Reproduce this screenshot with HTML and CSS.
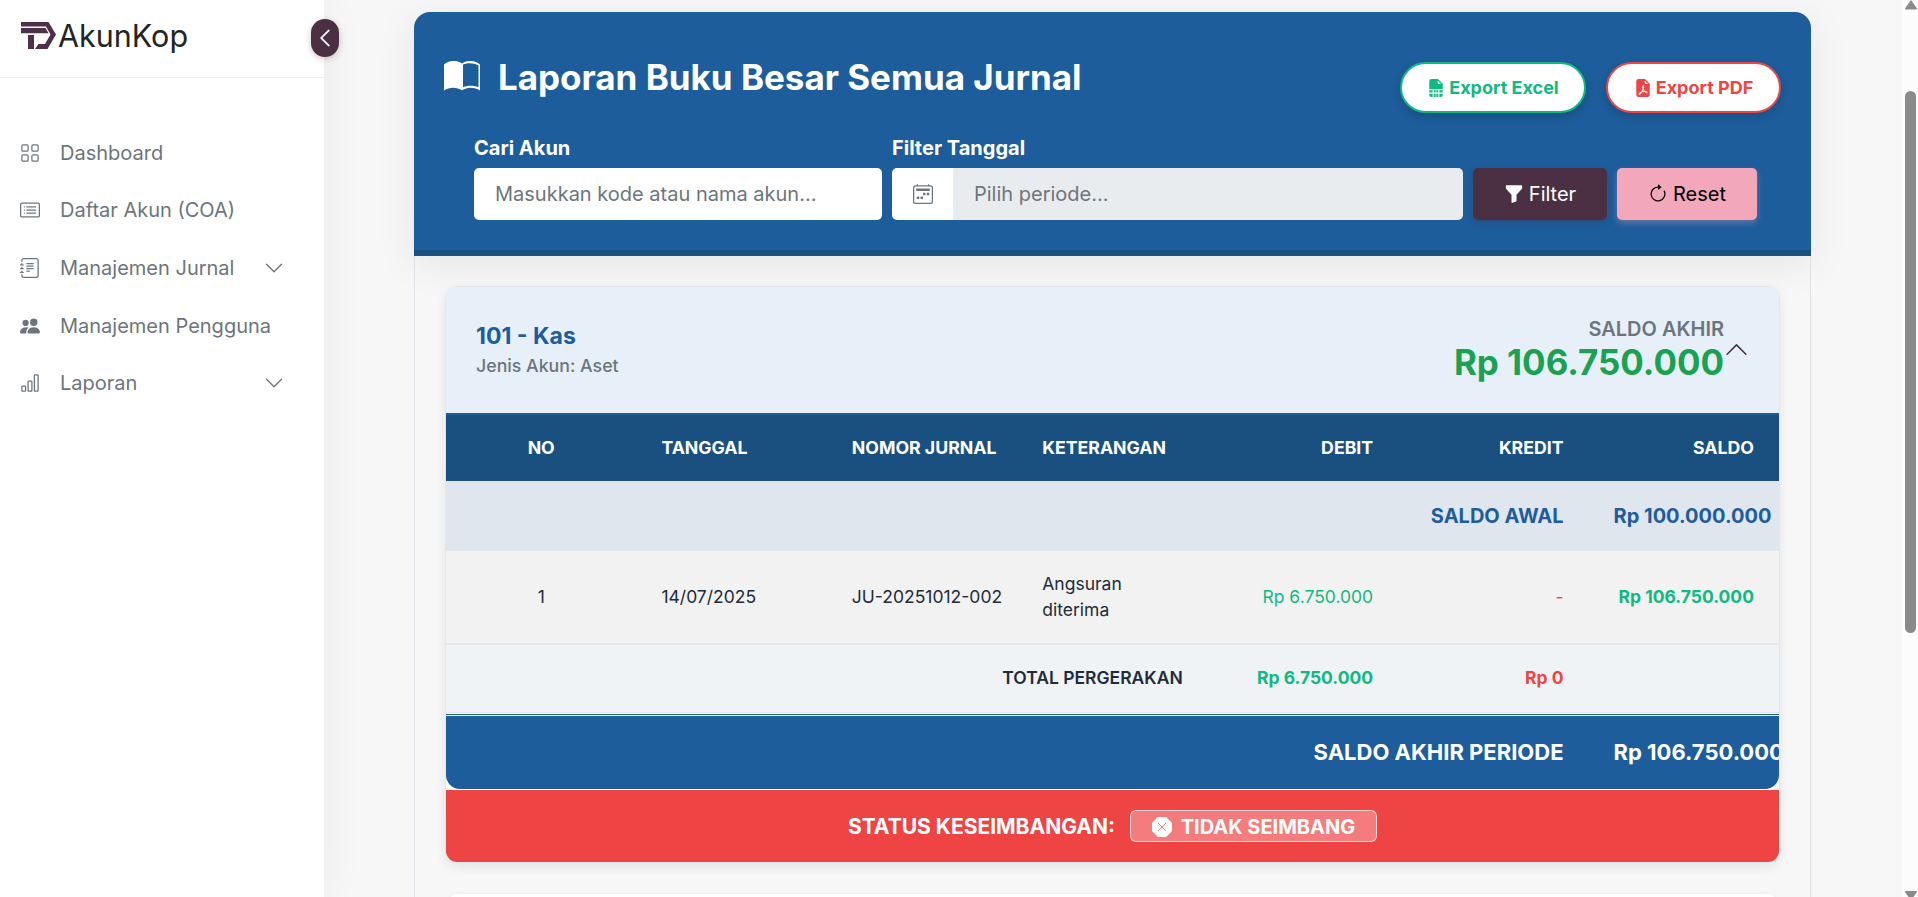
FILE: index.html
```html
<!DOCTYPE html>
<html lang="id">
<head>
<meta charset="utf-8">
<title>AkunKop</title>
<link rel="stylesheet" href="styles.css">
</head>
<body>
<div class="app">
  <aside class="sidebar">
    <div class="brand">
      <svg class="brand-logo" viewBox="0 0 35 27"><path fill="#4f3048" d="M0 0h27.500l7.500 12.500-8.500 14.500H14l3.500-5h6.500l5.500-9.500-4.500-8H0z"/><path fill="#4f3048" d="M0 6h24.500l3 5.200H0zM7 13h6v14H7z"/></svg>
      <span class="brand-name">AkunKop</span>
    </div>
    <button class="toggle"><svg width="20" height="20" viewBox="0 0 16 16" fill="currentColor" stroke="currentColor" stroke-width=".5"><path d="M11.354 1.646a.5.5 0 0 1 0 .708L5.707 8l5.647 5.646a.5.5 0 0 1-.708.708l-6-6a.5.5 0 0 1 0-.708l6-6a.5.5 0 0 1 .708 0"/></svg></button>
    <nav class="menu">
      <a class="item"><svg class="icon" viewBox="0 0 16 16"><path d="M1 2.500A1.500 1.500 0 0 1 2.500 1h3A1.500 1.500 0 0 1 7 2.500v3A1.500 1.500 0 0 1 5.500 7h-3A1.500 1.500 0 0 1 1 5.500zM2.500 2a.5.5 0 0 0-.5.5v3a.5.5 0 0 0 .5.5h3a.5.5 0 0 0 .5-.5v-3a.5.5 0 0 0-.5-.5zm6.500.5A1.500 1.500 0 0 1 10.500 1h3A1.500 1.500 0 0 1 15 2.500v3A1.500 1.500 0 0 1 13.500 7h-3A1.500 1.500 0 0 1 9 5.500zm1.500-.5a.5.5 0 0 0-.5.5v3a.5.5 0 0 0 .5.5h3a.5.5 0 0 0 .5-.5v-3a.5.5 0 0 0-.5-.5zM1 10.500A1.500 1.500 0 0 1 2.500 9h3A1.500 1.500 0 0 1 7 10.500v3A1.500 1.500 0 0 1 5.500 15h-3A1.500 1.500 0 0 1 1 13.500zm1.500-.5a.5.5 0 0 0-.5.5v3a.5.5 0 0 0 .5.5h3a.5.5 0 0 0 .5-.5v-3a.5.5 0 0 0-.5-.5zm6.500.5A1.500 1.500 0 0 1 10.500 9h3a1.500 1.500 0 0 1 1.500 1.500v3a1.500 1.500 0 0 1-1.500 1.500h-3A1.500 1.500 0 0 1 9 13.500zm1.500-.5a.5.5 0 0 0-.5.5v3a.5.5 0 0 0 .5.5h3a.5.5 0 0 0 .5-.5v-3a.5.5 0 0 0-.5-.5z"/></svg><span>Dashboard</span></a>
      <a class="item"><svg class="icon" viewBox="0 0 16 16"><path d="M14.500 3a.5.5 0 0 1 .5.5v9a.5.5 0 0 1-.5.5h-13a.5.5 0 0 1-.5-.5v-9a.5.5 0 0 1 .5-.5zm-13-1A1.500 1.500 0 0 0 0 3.500v9A1.500 1.500 0 0 0 1.500 14h13a1.500 1.500 0 0 0 1.500-1.500v-9A1.500 1.500 0 0 0 14.500 2z"/><path d="M5 8a.5.5 0 0 1 .5-.5h7a.5.5 0 0 1 0 1h-7A.5.5 0 0 1 5 8m0-2.500a.5.5 0 0 1 .5-.5h7a.5.5 0 0 1 0 1h-7a.5.5 0 0 1-.5-.5m0 5a.5.5 0 0 1 .5-.5h7a.5.5 0 0 1 0 1h-7a.5.5 0 0 1-.5-.5"/><circle cx="3.500" cy="5.500" r=".5"/><circle cx="3.500" cy="8" r=".5"/><circle cx="3.500" cy="10.500" r=".5"/></svg><span>Daftar Akun (COA)</span></a>
      <a class="item"><svg class="icon" viewBox="0 0 16 16"><path d="M5 10.500a.5.5 0 0 1 .5-.5h2a.5.5 0 0 1 0 1h-2a.5.5 0 0 1-.5-.5m0-2a.5.5 0 0 1 .5-.5h5a.5.5 0 0 1 0 1h-5a.5.5 0 0 1-.5-.5m0-2a.5.5 0 0 1 .5-.5h5a.5.5 0 0 1 0 1h-5a.5.5 0 0 1-.5-.5m0-2a.5.5 0 0 1 .5-.5h5a.5.5 0 0 1 0 1h-5a.5.5 0 0 1-.5-.5"/><path d="M3 0h10a2 2 0 0 1 2 2v12a2 2 0 0 1-2 2H3a2 2 0 0 1-2-2v-1h1v1a1 1 0 0 0 1 1h10a1 1 0 0 0 1-1V2a1 1 0 0 0-1-1H3a1 1 0 0 0-1 1v1H1V2a2 2 0 0 1 2-2"/><path d="M1 5v-.5a.5.5 0 0 1 1 0V5h.5a.5.5 0 0 1 0 1h-2a.5.5 0 0 1 0-1zm0 3v-.5a.5.5 0 0 1 1 0V8h.5a.5.5 0 0 1 0 1h-2a.5.5 0 0 1 0-1zm0 3v-.5a.5.5 0 0 1 1 0v.5h.5a.5.5 0 0 1 0 1h-2a.5.5 0 0 1 0-1z"/></svg><span>Manajemen Jurnal</span><svg class="chev" viewBox="0 0 16 16"><path d="M1.646 4.646a.5.5 0 0 1 .708 0L8 10.293l5.646-5.647a.5.5 0 0 1 .708.708l-6 6a.5.5 0 0 1-.708 0l-6-6a.5.5 0 0 1 0-.708"/></svg></a>
      <a class="item"><svg class="icon" viewBox="0 0 16 16"><path d="M7 14s-1 0-1-1 1-4 5-4 5 3 5 4-1 1-1 1zm4-6a3 3 0 1 0 0-6 3 3 0 0 0 0 6m-5.784 6A2.240 2.240 0 0 1 5 13c0-1.355.68-2.750 1.936-3.720A6.300 6.300 0 0 0 5 9c-4 0-5 3-5 4s1 1 1 1zM4.500 8a2.500 2.500 0 1 0 0-5 2.500 2.500 0 0 0 0 5"/></svg><span>Manajemen Pengguna</span></a>
      <a class="item"><svg class="icon" viewBox="0 0 16 16"><path d="M4 11H2v3h2zm5-4H7v7h2zm5-5v12h-2V2zm-2-1a1 1 0 0 0-1 1v12a1 1 0 0 0 1 1h2a1 1 0 0 0 1-1V2a1 1 0 0 0-1-1zM6 7a1 1 0 0 1 1-1h2a1 1 0 0 1 1 1v7a1 1 0 0 1-1 1H7a1 1 0 0 1-1-1zm-5 4a1 1 0 0 1 1-1h2a1 1 0 0 1 1 1v3a1 1 0 0 1-1 1H2a1 1 0 0 1-1-1z"/></svg><span>Laporan</span><svg class="chev" viewBox="0 0 16 16"><path d="M1.646 4.646a.5.5 0 0 1 .708 0L8 10.293l5.646-5.647a.5.5 0 0 1 .708.708l-6 6a.5.5 0 0 1-.708 0l-6-6a.5.5 0 0 1 0-.708"/></svg></a>
    </nav>
  </aside>
  <main class="content">
    <section class="report">
      <header class="report-head">
        <div class="title-row">
          <h1 class="title"><svg class="title-icon" viewBox="0 0 36 30"><path fill="#fff" fill-rule="evenodd" d="M0 3.500C5-.8 13-1.200 18 2.400 23-1.200 31-.8 36 3.500V29.500C31 25.800 23 25.800 18 29.200 13 25.800 5 25.800 0 29.500zM19 3.700v22.500c4-2 11-2 15.500 0V4.500c-4.500-2.800-11.500-3-15.500-.8z"/></svg>Laporan Buku Besar Semua Jurnal</h1>
          <div class="exports">
            <button class="export excel"><svg class="btn-icon" viewBox="0 0 16 16"><path d="M9.293 0H4a2 2 0 0 0-2 2v7h12V4.707A1 1 0 0 0 13.707 4L10 .293A1 1 0 0 0 9.293 0M9.500 3.500v-2l3 3h-2a1 1 0 0 1-1-1M14 10h-3v2h3zm0 3h-3v3h1a2 2 0 0 0 2-2zM10 16v-3H6v3zM10 12v-2H6v2zM5 16v-3H2v1a2 2 0 0 0 2 2zM2 12h3v-2H2z"/><path d="M8 10v6" stroke="#fff" stroke-width=".7"/></svg>Export Excel</button>
            <button class="export pdf"><svg class="btn-icon" viewBox="0 0 16 16"><path d="M5.523 12.424q.21-.124.459-.238a8 8 0 0 1-.45.606c-.28.337-.498.516-.635.572l-.035.012a.3.300 0 0 1-.026-.044c-.056-.11-.054-.216.04-.36.106-.165.319-.354.647-.548m2.455-1.647q-.178.037-.356.078a21 21 0 0 0 .5-1.050 12 12 0 0 0 .51.858q-.326.048-.654.114m2.525.939a4 4 0 0 1-.435-.41q.344.007.612.054c.317.057.466.147.518.209a.1.100 0 0 1 .026.064.44.440 0 0 1-.06.200.3.300 0 0 1-.094.124.1.100 0 0 1-.069.015c-.09-.003-.258-.066-.498-.256M8.278 6.970c-.04.244-.108.524-.200.829a5 5 0 0 1-.089-.346c-.076-.353-.087-.630-.046-.822.038-.177.110-.248.196-.283a.5.500 0 0 1 .145-.040c.013.030.028.092.032.198q.008.183-.038.465z"/><path fill-rule="evenodd" d="M4 0h5.293A1 1 0 0 1 10 .293L13.707 4a1 1 0 0 1 .293.707V14a2 2 0 0 1-2 2H4a2 2 0 0 1-2-2V2a2 2 0 0 1 2-2m5.500 1.500v2a1 1 0 0 0 1 1h2zM4.165 13.668c.090.180.230.343.438.419.207.075.412.040.580-.030.318-.130.635-.436.926-.786.333-.401.683-.927 1.021-1.510a11.700 11.700 0 0 1 1.997-.406c.300.383.610.713.910.950.280.220.603.403.934.417a.86.860 0 0 0 .510-.138c.155-.101.270-.247.354-.416.090-.181.145-.370.138-.563a.84.840 0 0 0-.200-.518c-.226-.270-.596-.400-.960-.465a5.800 5.800 0 0 0-1.335-.050 11 11 0 0 1-.980-1.686c.250-.660.437-1.284.520-1.794.036-.218.055-.426.048-.614a1.240 1.240 0 0 0-.127-.538.700.700 0 0 0-.477-.365c-.202-.043-.410 0-.601.077-.377.150-.576.470-.651.823-.073.340-.040.736.046 1.136.088.406.238.848.430 1.295a20 20 0 0 1-1.062 2.227 7.700 7.700 0 0 0-1.482.645c-.370.220-.699.480-.897.787-.210.326-.275.714-.080 1.103"/></svg>Export PDF</button>
          </div>
        </div>
        <div class="filters">
          <div class="field search"><label>Cari Akun</label><div class="input">Masukkan kode atau nama akun...</div></div>
          <div class="field period"><label>Filter Tanggal</label>
            <div class="group"><div class="addon"><svg width="20" height="20" viewBox="0 0 16 16"><path d="M11 7.500a.5.5 0 0 1 .5-.5h1a.5.5 0 0 1 .5.5v1a.5.5 0 0 1-.5.5h-1a.5.5 0 0 1-.5-.5zm-3 0a.5.5 0 0 1 .5-.5h1a.5.5 0 0 1 .5.5v1a.5.5 0 0 1-.5.5h-1a.5.5 0 0 1-.5-.5zm-2 3a.5.5 0 0 1 .5-.5h1a.5.5 0 0 1 .5.5v1a.5.5 0 0 1-.5.5h-1a.5.5 0 0 1-.5-.5zm-3 0a.5.5 0 0 1 .5-.5h1a.5.5 0 0 1 .5.5v1a.5.5 0 0 1-.5.5h-1a.5.5 0 0 1-.5-.5z"/><path d="M3.500 0a.5.5 0 0 1 .5.5V1h8V.5a.5.5 0 0 1 1 0V1h1a2 2 0 0 1 2 2v11a2 2 0 0 1-2 2H2a2 2 0 0 1-2-2V3a2 2 0 0 1 2-2h1V.5a.5.5 0 0 1 .5-.5M2 2a1 1 0 0 0-1 1v11a1 1 0 0 0 1 1h12a1 1 0 0 0 1-1V3a1 1 0 0 0-1-1z"/><path d="M2.500 4a.5.5 0 0 1 .5-.5h10a.5.5 0 0 1 .5.5v1a.5.5 0 0 1-.5.5H3a.5.5 0 0 1-.5-.5z"/></svg></div><div class="input readonly">Pilih periode...</div></div>
          </div>
          <button class="action apply"><svg width="20" height="20" viewBox="0 0 16 16"><path d="M1.500 1.500A.5.5 0 0 1 2 1h12a.5.5 0 0 1 .5.5v2a.5.5 0 0 1-.128.334L10 8.692V13.500a.5.5 0 0 1-.342.474l-3 1A.5.5 0 0 1 6 14.500V8.692L1.628 3.834A.5.5 0 0 1 1.500 3.500z"/></svg>Filter</button>
          <button class="action reset"><svg width="20" height="20" viewBox="0 0 16 16"><path fill-rule="evenodd" d="M8 3a5 5 0 1 0 4.546 2.914.5.5 0 0 1 .908-.417A6 6 0 1 1 8 2z"/><path d="M8 4.466V.534a.25.250 0 0 1 .410-.192l2.360 1.966c.120.100.120.284 0 .384L8.410 4.658A.25.250 0 0 1 8 4.466"/></svg>Reset</button>
        </div>
      </header>
      <div class="report-body">
        <article class="account">
          <div class="account-head">
            <div class="account-info"><div class="account-name">101 - Kas</div><div class="account-type">Jenis Akun: Aset</div></div>
            <div class="balance"><div class="balance-label">SALDO AKHIR</div><div class="balance-value">Rp 106.750.000</div></div>
            <svg class="collapse" viewBox="0 0 16 16"><path d="M7.646 4.646a.5.5 0 0 1 .708 0l6 6a.5.5 0 0 1-.708.708L8 5.707l-5.646 5.647a.5.5 0 0 1-.708-.708z"/></svg>
          </div>
          <div class="table">
            <div class="row thead"><div class="center">NO</div><div>TANGGAL</div><div>NOMOR JURNAL</div><div>KETERANGAN</div><div class="num">DEBIT</div><div class="num">KREDIT</div><div class="num">SALDO</div></div>
            <div class="row opening"><div class="num span6">SALDO AWAL</div><div>Rp 100.000.000</div></div>
            <div class="row entry"><div class="center">1</div><div>14/07/2025</div><div>JU-20251012-002</div><div>Angsuran<br>diterima</div><div class="num green">Rp 6.750.000</div><div class="num red">-</div><div class="num green strong">Rp 106.750.000</div></div>
            <div class="row total"><div class="num span4">TOTAL PERGERAKAN</div><div class="num green strong">Rp 6.750.000</div><div class="num red strong">Rp 0</div><div></div></div>
            <div class="row closing"><div class="num span6">SALDO AKHIR PERIODE</div><div>Rp 106.750.000</div></div>
          </div>
          <div class="status"><span>STATUS KESEIMBANGAN:</span><span class="badge"><svg width="20" height="20" viewBox="0 0 16 16"><path d="M11.460.146A.5.5 0 0 0 11.107 0H4.893a.5.5 0 0 0-.353.146L.146 4.540A.5.5 0 0 0 0 4.893v6.214a.5.5 0 0 0 .146.353l4.394 4.394a.5.5 0 0 0 .353.146h6.214a.5.5 0 0 0 .353-.146l4.394-4.394a.5.5 0 0 0 .146-.353V4.893a.5.5 0 0 0-.146-.353z"/><path d="M5 5l6 6M11 5l-6 6" stroke="#f47c7c" stroke-width=".8" stroke-linecap="round"/></svg>TIDAK SEIMBANG</span></div>
        </article>
        <div class="next-card"></div>
      </div>
    </section>
  </main>
  <div class="scrollbar"><svg width="12" height="10" viewBox="0 0 12 10"><path d="M6 0l6 8.500q0 1-1 1H1q-1 0-1-1z"/></svg><div class="thumb"></div><svg class="down" width="12" height="6" viewBox="0 0 12 6"><path d="M1 0h10q1 0 1 1L8.500 6h-5L0 1q0-1 1-1z"/></svg></div>
</div>
</body>
</html>
```
FILE: styles.css
```css
* { box-sizing: border-box; }
body { margin: 0; background: #f7f7f7; font-family: Inter, "Liberation Sans", sans-serif; font-size: 20px; color: #212529; overflow: hidden; }
button { font-family: inherit; }
.app { display: flex; height: 897px; overflow: hidden; }

.sidebar { position: relative; z-index: 1; width: 324px; flex: none; background: #fff; box-shadow: 0 0 40px rgba(0,0,0,.06); }
.brand { height: 78px; border-bottom: 1px solid #ececec; padding: 0 0 6px 21px; display: flex; align-items: center; gap: 2px; }
.brand-logo { width: 35px; height: 27px; }
.brand-name { font-size: 30.500px; line-height: 36px; }
.toggle { position: absolute; left: 311px; top: 19px; width: 28px; height: 38px; border: 0; border-radius: 14px; background: #4b3044; color: #fff; padding: 0; display: flex; align-items: center; justify-content: center; box-shadow: 0 2px 6px rgba(75,48,68,.25); }
.menu { padding: 46px 20px 0; }
.item { display: flex; align-items: center; height: 57.6px; color: #6c757d; }
.icon { width: 20px; height: 20px; margin-right: 20px; fill: currentColor; flex: none; }
.chev { width: 20px; height: 20px; margin: 0 20px 0 auto; fill: currentColor; }

.content { flex: 1; padding: 12px 90px 0; }
.report { width: 1397px; }
.report-head { height: 244px; background: #1d5d9b; border-bottom: 6px solid #1a5080; border-radius: 16px 16px 0 0; padding: 41px 30px 0; box-shadow: 0 8px 40px rgba(0,0,0,.08); color: #fff; }
.title-row { display: flex; justify-content: space-between; height: 82px; }
.title { margin: 0; display: flex; align-items: flex-start; gap: 18px; font-size: 35px; line-height: 48px; font-weight: 700; letter-spacing: -.02px; }
.title-icon { width: 36px; height: 30px; margin-top: 8px; }
.exports { display: flex; gap: 20px; padding-top: 9px; }
.export { height: 51px; border: 2px solid; border-radius: 26px; background: #fff; font-size: 18px; font-weight: 700; display: flex; align-items: center; justify-content: center; gap: 4px; padding: 0; box-shadow: 0 4px 8px rgba(0,0,0,.15); }
.excel { width: 186px; color: #10b981; }
.pdf { width: 175px; color: #ef4444; }
.btn-icon { width: 18px; height: 18px; fill: currentColor; }
.filters { display: flex; align-items: flex-end; padding-left: 30px; height: 85px; }
.field label { display: block; font-weight: 700; line-height: 24px; margin-bottom: 8px; }
.search { width: 408px; margin-right: 10px; }
.period { width: 571px; margin-right: 10px; }
.input { height: 52px; line-height: 52px; background: #fff; color: #6c757d; border-radius: 5px; padding-left: 21px; }
.group { display: flex; }
.addon { width: 61px; background: #fff; border-radius: 5px 0 0 5px; display: flex; align-items: center; justify-content: center; fill: #6c757d; }
.readonly { flex: 1; background: #e9ecef; border-radius: 0 5px 5px 0; }
.action { height: 52px; border: 0; border-radius: 5px; font-size: 20px; display: flex; align-items: center; justify-content: center; gap: 5px; padding: 0; fill: currentColor; }
.apply { width: 134px; background: #4b3044; color: #fff; margin-right: 10px; box-shadow: 0 3px 6px rgba(75,48,68,.3); }
.reset { width: 140px; background: #f2a7bb; color: #000; box-shadow: 0 3px 6px rgba(242,167,187,.35); }

.report-body { border: solid #dee2e6; border-width: 0 1px; padding: 30px 30px 0; height: 700px; }
.account { border: 1px solid #e2e6ee; border-radius: 12px; overflow: hidden; box-shadow: 0 4px 12px rgba(0,0,0,.08); background: #fff; }
.account-head { height: 128px; background: #e7f0f8; border-bottom: 2px solid #1d5d9b; display: flex; padding: 31px 30px 0 30px; }
.account-name { font-size: 23px; line-height: 36px; font-weight: 700; color: #1d5d9b; }
.account-type { font-size: 17.750px; line-height: 24px; font-weight: 500; color: #6c757d; }
.balance { margin-left: auto; text-align: right; }
.balance-label { font-weight: 600; line-height: 22px; color: #6c757d; }
.balance-value { font-size: 34.900px; line-height: 45px; font-weight: 700; color: #1ba152; }
.collapse { width: 25px; height: 25px; margin-top: 19px; fill: #4b3044; }
.row { display: grid; grid-template-columns: repeat(7, 190.430px); align-items: center; font-size: 17.500px; color: #212b3a; }
.row > div { padding: 0 25px; white-space: nowrap; }
.row .num { text-align: right; }
.row .center { text-align: center; }
.row .span6 { grid-column: span 6; }
.row .span4 { grid-column: span 4; }
.row .green { color: #10b981; }
.row .red { color: #ef4444; }
.row .strong { font-weight: 700; }
.thead { height: 66px; background: #1a5080; color: #fff; font-weight: 700; font-size: 17.700px; padding-bottom: 2px; }
.opening { height: 70px; background: #e0e6ee; color: #1d5d9b; font-weight: 700; font-size: 20px; }
.entry { height: 94px; background: #f2f2f2; border-bottom: 2px solid #e4e6ec; line-height: 26px; }
.total { height: 68px; background: #eff3f6; border-bottom: 1px solid #e2e6ee; font-weight: 600; padding-bottom: 2px; }
.closing { height: 76px; background: #1d5d9b; border-top: 3px double #fff; color: #fff; font-weight: 700; font-size: 22px; padding-bottom: 2px; border-radius: 0 0 14px 14px; }
.status { height: 72px; margin-top: 1px; background: #ef4444; color: #fff; font-weight: 700; font-size: 21px; display: flex; align-items: center; justify-content: center; gap: 15px; }
.badge { height: 32px; width: 247px; font-size: 20px; padding-top: 1px; border: 1px solid rgba(255,255,255,.7); border-radius: 6px; background: rgba(255,255,255,.3); display: flex; align-items: center; justify-content: center; gap: 9px; fill: #fff; }
.next-card { height: 40px; margin: 31px 4px 0; background: #fff; border-radius: 8px; box-shadow: 0 1px 4px rgba(0,0,0,.08); }

.scrollbar { width: 16px; background: #fcfcfc; display: flex; flex-direction: column; align-items: center; fill: #8a8a8a; padding-left: 1px; }
.thumb { width: 11px; height: 542px; margin-top: 81px; border-radius: 6px; background: #8a8a8a; }
.down { margin-top: auto; }
```
